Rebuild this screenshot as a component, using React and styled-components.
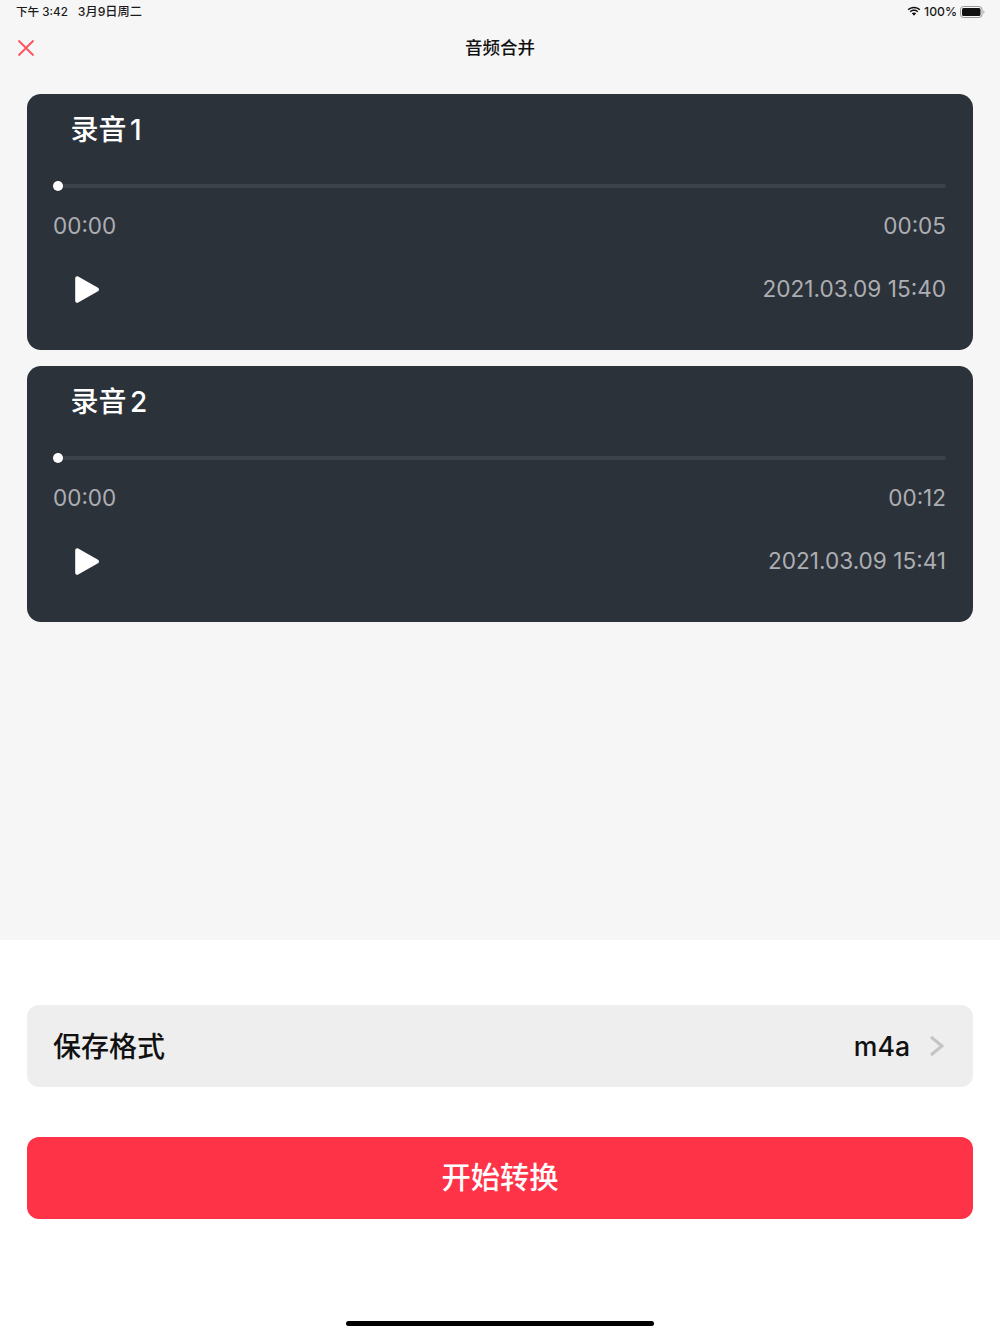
import React from "react";
import styled, { createGlobalStyle } from "styled-components";

const FONT = `Inter, "Noto Sans CJK SC", sans-serif`;

const Global = createGlobalStyle`
  html, body { margin: 0; padding: 0; background: #fff; }
  * { box-sizing: border-box; }
  body { font-family: ${FONT}; }
`;

const Page = styled.div`
  width: 1000px;
  height: 1334px;
  display: flex;
  flex-direction: column;
  background: #fff;
  overflow: hidden;
`;

const TopArea = styled.div`
  height: 940px;
  flex: none;
  background: #f6f6f6;
  display: flex;
  flex-direction: column;
`;

const StatusBar = styled.div`
  height: 24px;
  padding: 0 15px 0 16px;
  display: flex;
  align-items: center;
  justify-content: space-between;
  font-weight: 500;
  color: #1a1a1a;
`;

const StatusLeft = styled.div`
  display: flex;
  align-items: baseline;
  gap: 10px;
  padding-bottom: 2px;
  font-size: 11.6px;
`;

const StatusDate = styled.span`
  font-size: 12.2px;
`;

const StatusRight = styled.div`
  display: flex;
  align-items: center;
  gap: 3px;
  padding-bottom: 1px;
  font-size: 12.2px;
`;

const NavBar = styled.div`
  height: 48px;
  padding-left: 17px;
  display: flex;
  align-items: center;
  position: relative;
`;

const NavTitle = styled.div`
  position: absolute;
  left: 0;
  right: 0;
  padding-bottom: 3px;
  text-align: center;
  font-size: 17.5px;
  font-weight: 500;
  color: #111;
`;

const CardList = styled.div`
  margin-top: 22px;
  padding: 0 27px;
  display: flex;
  flex-direction: column;
  gap: 16px;
`;

const Card = styled.div`
  height: 256px;
  padding: 0 27px 0 26px;
  background: #2c323a;
  border-radius: 14px;
  display: flex;
  flex-direction: column;
`;

const CardTitle = styled.div`
  height: 72px;
  padding: 0 0 4px 17.5px;
  display: flex;
  align-items: center;
  font-size: 28px;
  font-weight: 500;
  word-spacing: -4px;
  color: #fff;
`;

const Track = styled.div`
  margin-top: 18px;
  height: 4px;
  background: #3d424a;
  border-radius: 2px;
  position: relative;
`;

const Thumb = styled.div`
  position: absolute;
  left: 0;
  top: -3px;
  width: 10px;
  height: 10px;
  border-radius: 50%;
  background: #fff;
`;

const TimeRow = styled.div`
  margin-top: 18px;
  height: 40px;
  padding-bottom: 2px;
  display: flex;
  align-items: center;
  justify-content: space-between;
  font-size: 22.5px;
  color: #adaeb2;
`;

const ActionRow = styled.div`
  margin-top: 23px;
  height: 40px;
  display: flex;
  align-items: center;
  justify-content: space-between;
  padding-left: 20px;
  font-size: 22.6px;
  color: #adaeb2;
`;

const DateText = styled.span`
  padding-bottom: 2px;
`;

const BottomArea = styled.div`
  flex: 1;
  padding: 65px 27px 0;
  display: flex;
  flex-direction: column;
  position: relative;
`;

const FormatRow = styled.div`
  height: 82px;
  padding: 0 28px 0 26px;
  background: #eeeeee;
  border-radius: 12px;
  display: flex;
  align-items: center;
  justify-content: space-between;
  color: #111;
`;

const FormatLabel = styled.div`
  padding-bottom: 3px;
  font-size: 28px;
  font-weight: 500;
`;

const FormatValue = styled.div`
  display: flex;
  align-items: center;
  gap: 19px;
  font-size: 26.6px;
  font-weight: 500;
`;

const StartButton = styled.div`
  margin-top: 50px;
  height: 81.5px;
  padding-bottom: 5px;
  background: #ff3348;
  border-radius: 12px;
  display: flex;
  align-items: center;
  justify-content: center;
  font-size: 29.3px;
  font-weight: 500;
  color: #fff;
`;

const HomeIndicator = styled.div`
  position: absolute;
  left: 346px;
  bottom: 8px;
  width: 308px;
  height: 5px;
  border-radius: 3px;
  background: #000;
`;

const WifiIcon = () => (
  <svg width="14" height="11" viewBox="0 0 14 11">
    <path d="M7 2.200c2.100 0 3.900.8 5.300 2.100l1-1.100C11.700 1.700 9.500.7 7 .7S2.300 1.700.7 3.200l1 1.100C3.100 3 4.900 2.200 7 2.200z" fill="#111" />
    <path d="M7 5c1.300 0 2.400.5 3.300 1.300l1-1.100C10.100 4.100 8.600 3.500 7 3.500s-3.100.6-4.300 1.700l1 1.100C4.600 5.500 5.700 5 7 5z" fill="#111" />
    <path d="M7 6.400c-.9 0-1.600.3-2.200.8L7 9.700l2.200-2.500c-.6-.5-1.300-.8-2.200-.8z" fill="#111" />
  </svg>
);

const BatteryIcon = () => (
  <svg width="25" height="12" viewBox="0 0 25 12">
    <rect x="0.500" y="0.500" width="21.500" height="11" rx="3" fill="none" stroke="#999" />
    <rect x="2" y="2" width="18.500" height="8" rx="1.500" fill="#111" />
    <path d="M23.300 4.200c.8.300 1.200.9 1.200 1.800s-.4 1.500-1.200 1.800z" fill="#aaa" />
  </svg>
);

const CloseIcon = () => (
  <svg width="18" height="18" viewBox="0 0 18 18">
    <path d="M1.500 1.500l15 15M16.500 1.500l-15 15" stroke="#ff5060" strokeWidth="1.800" fill="none" />
  </svg>
);

const PlayIcon = () => (
  <svg width="27" height="29" viewBox="0 0 27 29">
    <path d="M4.200 3.200L24 14.500L4.200 25.800Z" fill="#fff" stroke="#fff" strokeWidth="4" strokeLinejoin="round" />
  </svg>
);

const Chevron = () => (
  <svg width="16" height="22" viewBox="0 0 16 22">
    <path d="M2 2l11 9-11 9" stroke="#c4c4c4" strokeWidth="3" fill="none" />
  </svg>
);

const recordings = [
  { title: "录音 1", duration: "00:05", date: "2021.03.09 15:40" },
  { title: "录音 2", duration: "00:12", date: "2021.03.09 15:41" },
];

export default function App() {
  return (
    <Page>
      <Global />
      <TopArea>
        <StatusBar>
          <StatusLeft>
            <span>下午 3:42</span>
            <StatusDate>3月9日周二</StatusDate>
          </StatusLeft>
          <StatusRight>
            <WifiIcon />
            <span>100%</span>
            <BatteryIcon />
          </StatusRight>
        </StatusBar>
        <NavBar>
          <CloseIcon />
          <NavTitle>音频合并</NavTitle>
        </NavBar>
        <CardList>
          {recordings.map((r) => (
            <Card key={r.title}>
              <CardTitle>{r.title}</CardTitle>
              <Track>
                <Thumb />
              </Track>
              <TimeRow>
                <span>00:00</span>
                <span>{r.duration}</span>
              </TimeRow>
              <ActionRow>
                <PlayIcon />
                <DateText>{r.date}</DateText>
              </ActionRow>
            </Card>
          ))}
        </CardList>
      </TopArea>
      <BottomArea>
        <FormatRow>
          <FormatLabel>保存格式</FormatLabel>
          <FormatValue>
            <span>m4a</span>
            <Chevron />
          </FormatValue>
        </FormatRow>
        <StartButton>开始转换</StartButton>
        <HomeIndicator />
      </BottomArea>
    </Page>
  );
}
